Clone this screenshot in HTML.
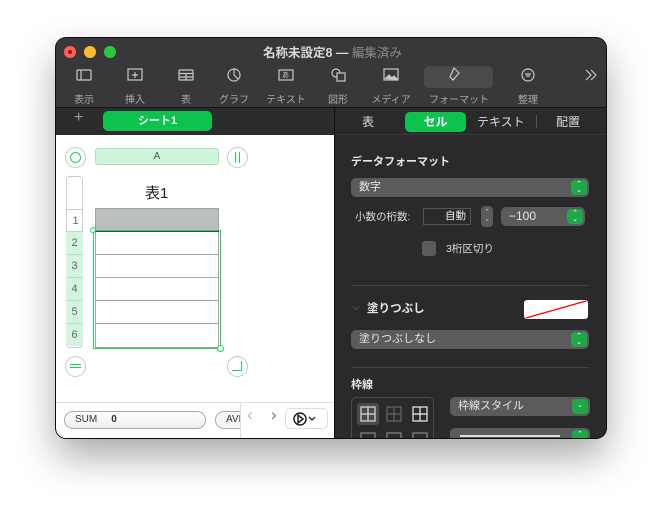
<!DOCTYPE html>
<html><head><meta charset="utf-8"><style>
*{margin:0;padding:0;box-sizing:border-box}
body{width:661px;height:511px;background:#fff;position:relative;overflow:hidden;font-family:"Liberation Sans","Noto Sans CJK JP",sans-serif}
.a{position:absolute}
#win{left:56px;top:38px;width:550px;height:400px;border-radius:10px;overflow:hidden;background:#2a2a2c;box-shadow:0 18px 40px rgba(0,0,0,.35),0 0 0 1px #111}
.t{position:absolute;white-space:nowrap}
.tl{color:#a8a8aa;font-size:10px;transform:translateX(-50%)}
.pop{position:absolute;background:#5b5b5e;border-radius:5px;color:#e6e6e6;font-size:11px;padding-left:8px;line-height:18px}
.stp{position:absolute;right:2px;top:2px;width:16px;height:15px;background:#1fa84a;border-radius:4px;color:#fff;font-size:7px;line-height:6px;text-align:center;padding-top:2px}
.row{position:absolute;left:10px;width:17px;height:23px;border-top:1px solid #b8dcc4;background:#d3f5df;color:#666;font-size:11px;text-align:center;line-height:23px}
.cell{position:absolute;left:39px;width:124px;height:23px;border-top:1px solid #a5a5a5}
</style></head><body>
<div id="win" class="a">
 <div class="a" style="left:0;top:0;width:550px;height:70px;background:#38383a;border-bottom:1px solid #141414"></div>
 <div class="a" style="left:8px;top:8px;width:12px;height:12px;border-radius:6px;background:#fe5f57"></div>
 <div class="a" style="left:12px;top:12px;width:4px;height:4px;border-radius:2px;background:#8c1a10"></div>
 <div class="a" style="left:28px;top:8px;width:12px;height:12px;border-radius:6px;background:#febc2e"></div>
 <div class="a" style="left:48px;top:8px;width:12px;height:12px;border-radius:6px;background:#28c840"></div>
 <div class="t" style="left:207px;top:4px;font-size:12.5px;font-weight:bold;color:#d8d8d8">名称未設定8 — <span style="color:#8a8a8c;font-weight:normal">編集済み</span></div>
 <div class="a" style="left:368px;top:28px;width:69px;height:22px;border-radius:5px;background:#4a4a4c"></div>
 <svg class="a" style="left:0;top:0" width="550" height="70" fill="none" stroke="#c8c8c8" stroke-width="1.2">
  <rect x="21" y="32" width="14" height="10" rx="1"/><line x1="25" y1="32" x2="25" y2="42"/>
  <rect x="72" y="31" width="14" height="11"/><path d="M79 34v6M76 37h6"/>
  <rect x="123" y="32" width="14" height="10" rx="1"/><path d="M123 35.5h14M123 39h14M130 35.5v6.5"/>
  <circle cx="178" cy="37" r="6"/><path d="M178 31v6l4 4"/>
  <rect x="223" y="32" width="14" height="10"/>
  <circle cx="280" cy="35" r="4"/><rect x="281" y="35" width="8" height="8" fill="#38383a"/>
  <rect x="328" y="31" width="14" height="11"/><path d="M329 41l4-4 3 3 2-2 4 4" fill="#c8c8c8"/>
  <path d="M398 30l5 5-6 7-3-3z"/>
  <circle cx="472" cy="37" r="6"/><path d="M469 36h6M470 38h4"/>
  <path d="M530 32l5 5-5 5M535 32l5 5-5 5"/>
 </svg>
 <div class="t" style="left:226px;top:32px;font-size:7px;color:#c8c8c8">あ</div>
 <div class="t tl" style="left:28px;top:53px">表示</div>
 <div class="t tl" style="left:79px;top:53px">挿入</div>
 <div class="t tl" style="left:130px;top:53px">表</div>
 <div class="t tl" style="left:178px;top:53px">グラフ</div>
 <div class="t tl" style="left:230px;top:53px">テキスト</div>
 <div class="t tl" style="left:282px;top:53px">図形</div>
 <div class="t tl" style="left:335px;top:53px">メディア</div>
 <div class="t tl" style="left:403px;top:53px">フォーマット</div>
 <div class="t tl" style="left:472px;top:53px">整理</div>
 <div class="a" style="left:0;top:70px;width:278px;height:27px;background:#2c2c2e"></div>
 <div class="a" style="left:278px;top:70px;width:1px;height:330px;background:#0e0e0e"></div>
 <div class="t" style="left:18px;top:71px;color:#9a9a9a;font-size:16px">+</div>
 <div class="a" style="left:47px;top:73px;width:109px;height:20px;border-radius:5px;background:#0dc24d;color:#fff;font-size:11px;font-weight:bold;text-align:center;line-height:20px">シート1</div>
 <div class="a" style="left:279px;top:70px;width:271px;height:27px;background:#2a2a2c;border-bottom:1px solid #3a3a3c"></div>
 <div class="t" style="left:306px;top:75px;color:#ddd;font-size:12px">表</div>
 <div class="a" style="left:349px;top:74px;width:61px;height:20px;border-radius:5px;background:#0dc24d;color:#fff;font-size:12px;font-weight:bold;text-align:center;line-height:20px">セル</div>
 <div class="t" style="left:421px;top:75px;color:#ddd;font-size:12px">テキスト</div>
 <div class="a" style="left:480px;top:77px;width:1px;height:13px;background:#555"></div>
 <div class="t" style="left:500px;top:75px;color:#ddd;font-size:12px">配置</div>
 <div class="a" style="left:0;top:97px;width:278px;height:303px;background:#fff">
  <div class="a" style="left:9px;top:12px;width:21px;height:21px;border-radius:50%;border:1px solid #c8c8c8"></div>
  <div class="a" style="left:14px;top:17px;width:11px;height:11px;border-radius:50%;border:1.5px solid #1ed15a"></div>
  <div class="a" style="left:39px;top:13px;width:124px;height:17px;border-radius:3px;background:#cdf6dc;border:1px solid #b5dcc3;color:#555;font-size:10px;text-align:center;line-height:15px">A</div>
  <div class="a" style="left:171px;top:12px;width:21px;height:21px;border-radius:50%;border:1px solid #c8c8c8"></div>
  <div class="a" style="left:179px;top:17px;width:5px;height:11px;border-left:1.5px solid #1ed15a;border-right:1.5px solid #1ed15a"></div>
  <div class="a" style="left:10px;top:41px;width:17px;height:172px;border-radius:4px;border:1px solid #ccc;background:#fff;overflow:hidden">
   <div class="a" style="left:0;top:32px;width:17px;height:23px;border-top:1px solid #ccc;color:#666;font-size:11px;text-align:center;line-height:23px">1</div>
  </div>
  <div class="row" style="top:96px">2</div><div class="row" style="top:119px">3</div><div class="row" style="top:142px">4</div><div class="row" style="top:165px">5</div><div class="row" style="top:188px;border-radius:0 0 4px 4px">6</div>
  <div class="t" style="left:89px;top:47px;font-size:15px;color:#222">表1</div>
  <div class="a" style="left:39px;top:73px;width:124px;height:140px;border:1px solid #a5a5a5;background:#fff"></div>
  <div class="a" style="left:39px;top:73px;width:124px;height:23px;background:#bcbfc0;border:1px solid #a5a5a5"></div>
  <div class="cell" style="top:96px;border-top:1.5px solid #444"></div><div class="cell" style="top:119px"></div><div class="cell" style="top:142px"></div><div class="cell" style="top:165px"></div><div class="cell" style="top:188px"></div>
  <div class="a" style="left:37px;top:95px;width:128px;height:119px;border:1px solid #1ed15a"></div>
  <div class="a" style="left:34px;top:92px;width:6px;height:6px;border-radius:50%;border:1px solid #1ed15a;background:#fff"></div>
  <div class="a" style="left:161px;top:210px;width:7px;height:7px;border-radius:50%;border:1px solid #1ed15a;background:#fff"></div>
  <div class="a" style="left:9px;top:221px;width:21px;height:21px;border-radius:50%;border:1px solid #c8c8c8"></div>
  <div class="a" style="left:14px;top:229px;width:11px;height:4px;border-top:1.5px solid #1ed15a;border-bottom:1.5px solid #1ed15a"></div>
  <div class="a" style="left:171px;top:221px;width:21px;height:21px;border-radius:50%;border:1px solid #c8c8c8"></div>
  <div class="a" style="left:176px;top:226px;width:10px;height:10px;border-right:1.5px solid #1ed15a;border-bottom:1.5px solid #1ed15a"></div>
  <div class="a" style="left:0;top:267px;width:278px;height:1px;background:#ddd"></div>
  <div class="a" style="left:8px;top:276px;width:142px;height:18px;border-radius:9px;border:1px solid #aaa;background:linear-gradient(#fff,#eee);font-size:10px;color:#333;line-height:16px;padding-left:10px">SUM<b style="margin-left:14px">0</b></div>
  <div class="a" style="left:159px;top:276px;width:40px;height:18px;border-radius:9px;border:1px solid #aaa;background:#f6f6f6;font-size:10px;color:#333;line-height:16px;padding-left:10px">AVE</div>
  <div class="a" style="left:184px;top:268px;width:94px;height:35px;background:#fff;border-left:1px solid #ddd"></div>
  <div class="t" style="left:191px;top:270px;color:#bbb;font-size:17px">‹</div>
  <div class="t" style="left:215px;top:270px;color:#777;font-size:17px">›</div>
  <div class="a" style="left:229px;top:273px;width:43px;height:21px;border-radius:5px;border:1px solid #ddd;background:#fff"></div>
  <svg class="a" style="left:236px;top:276px" width="32" height="16" fill="none" stroke="#222" stroke-width="1.5"><circle cx="8" cy="8" r="6"/><path d="M6 4v8l5-4z"/><path d="M17 6l3 3 3-3" stroke-width="1.3"/></svg>
 </div>
 <div class="t" style="left:295px;top:115px;color:#e6e6e6;font-size:11px;font-weight:bold">データフォーマット</div>
 <div class="pop" style="left:295px;top:140px;width:238px;height:19px">数字<div class="stp">⌃<br>⌄</div></div>
 <div class="t" style="left:299px;top:171px;color:#ddd;font-size:10.5px">小数の桁数:</div>
 <div class="a" style="left:367px;top:170px;width:48px;height:17px;border:1px solid #555;background:#2a2a2c;color:#eee;font-size:10.5px;text-align:right;padding-right:4px;line-height:15px">自動</div>
 <div class="a" style="left:425px;top:168px;width:12px;height:21px;border-radius:4px;background:#5b5b5e;color:#ccc;font-size:7px;line-height:7px;text-align:center;padding-top:3px">⌃<br>⌄</div>
 <div class="pop" style="left:445px;top:169px;width:84px;height:19px;font-size:12px">−100<div class="stp">⌃<br>⌄</div></div>
 <div class="a" style="left:366px;top:203px;width:14px;height:15px;border-radius:3px;background:#5b5b5e"></div>
 <div class="t" style="left:390px;top:203px;color:#ddd;font-size:10.5px">3桁区切り</div>
 <div class="a" style="left:295px;top:247px;width:238px;height:1px;background:#444"></div>
 <div class="t" style="left:296px;top:264px;color:#888;font-size:10px">⌵</div>
 <div class="t" style="left:311px;top:262px;color:#e6e6e6;font-size:11.5px;font-weight:bold">塗りつぶし</div>
 <svg class="a" style="left:468px;top:262px" width="64" height="19"><rect width="64" height="19" rx="3" fill="#fff"/><line x1="2" y1="18" x2="62" y2="1" stroke="#f00" stroke-width="1.3"/></svg>
 <div class="pop" style="left:295px;top:292px;width:238px;height:19px">塗りつぶしなし<div class="stp">⌃<br>⌄</div></div>
 <div class="a" style="left:295px;top:329px;width:238px;height:1px;background:#444"></div>
 <div class="t" style="left:295px;top:338px;color:#e6e6e6;font-size:11px;font-weight:bold">枠線</div>
 <div class="a" style="left:295px;top:359px;width:83px;height:50px;border-radius:5px;border:1px solid #4a4a4c"></div>
 <div class="a" style="left:301px;top:365px;width:22px;height:22px;border-radius:3px;background:#4a4a4c"></div>
 <svg class="a" style="left:301px;top:365px" width="75" height="40" fill="none" stroke-width="1.2"><g stroke="#ddd"><rect x="4" y="4" width="14" height="14"/><path d="M11 4v14M4 11h14"/></g><g stroke="#666"><rect x="30" y="4" width="14" height="14"/><path d="M37 4v14M30 11h14"/></g><g stroke="#eee"><rect x="56" y="4" width="14" height="14"/><path d="M63 4v14M56 11h14"/></g><g stroke="#888"><rect x="4" y="30" width="14" height="14"/><rect x="30" y="30" width="14" height="14"/><rect x="56" y="30" width="14" height="14"/></g></svg>
 <div class="pop" style="left:394px;top:359px;width:140px;height:19px">枠線スタイル<div class="stp" style="padding-top:4px">⌄</div></div>
 <div class="pop" style="left:394px;top:390px;width:140px;height:20px"><div class="a" style="left:10px;top:7px;width:100px;height:2px;background:#ddd"></div><div class="stp">⌃</div></div>
</div>
</body></html>
